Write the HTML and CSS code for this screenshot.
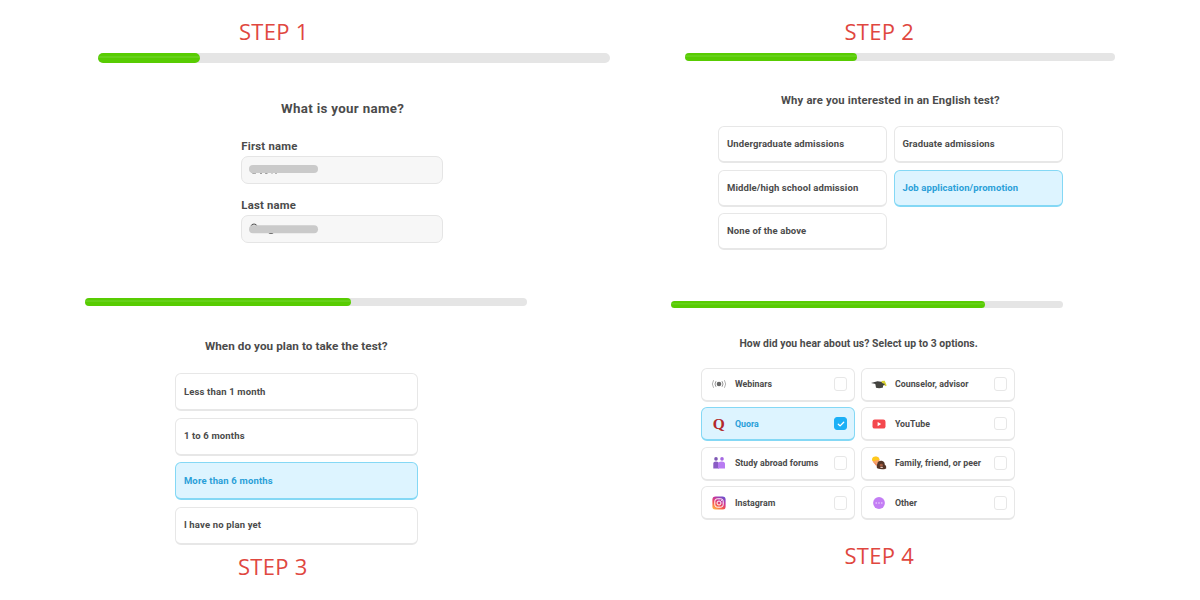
FILE: index.html
```
<!DOCTYPE html>
<html lang="en">
<head>
<meta charset="utf-8">
<title>Sign-up steps</title>
<link rel="stylesheet" href="styles.css">
</head>
<body>
<main class="board">
  <section class="panel panel-name">
    <h2 class="step">STEP 1</h2>
    <div class="track"><div class="fill"></div></div>
    <h3 class="question"><span>What is your name?</span></h3>
    <div class="form">
      <div class="label"><span>First name</span></div>
      <div class="field">
        <svg width="70" height="14" viewBox="0 0 70 14"><path d="M2 9.500q1 2.500 5 1.500M11 11.200h2M16 11q2 1 3-.5M22 10.800h2M26 11h2" fill="none" stroke="#777" stroke-width="1"/><rect x="0" y="3" width="69" height="8" rx="4" fill="#cacaca"/></svg>
      </div>
      <div class="label"><span>Last name</span></div>
      <div class="field">
        <svg width="70" height="14" viewBox="0 0 70 14"><path d="M2 5q3-4 6 0M20 11.700q2 1.500 4 0" fill="none" stroke="#555" stroke-width="1.200"/><rect x="0" y="4.300" width="69" height="8" rx="4" fill="#cacaca"/></svg>
      </div>
    </div>
  </section>

  <section class="panel panel-why">
    <h2 class="step">STEP 2</h2>
    <div class="track"><div class="fill"></div></div>
    <h3 class="question"><span>Why are you interested in an English test?</span></h3>
    <div class="options">
      <div class="option"><span>Undergraduate admissions</span></div>
      <div class="option"><span>Graduate admissions</span></div>
      <div class="option"><span>Middle/high school admission</span></div>
      <div class="option selected"><span>Job application/promotion</span></div>
      <div class="option"><span>None of the above</span></div>
    </div>
  </section>

  <section class="panel panel-when">
    <div class="track"><div class="fill"></div></div>
    <h3 class="question"><span>When do you plan to take the test?</span></h3>
    <div class="options">
      <div class="option"><span>Less than 1 month</span></div>
      <div class="option"><span>1 to 6 months</span></div>
      <div class="option selected"><span>More than 6 months</span></div>
      <div class="option"><span>I have no plan yet</span></div>
    </div>
    <h2 class="step">STEP 3</h2>
  </section>

  <section class="panel panel-hear">
    <div class="track"><div class="fill"></div></div>
    <h3 class="question"><span>How did you hear about us? Select up to 3 options.</span></h3>
    <div class="options">
      <div class="option">
        <svg class="icon" viewBox="0 0 16 16"><circle cx="8" cy="8" r="2.300" fill="#666"/><path d="M5 5.200q-2 2.800 0 5.600M11 5.200q2 2.800 0 5.600" fill="none" stroke="#888" stroke-width=".9"/><path d="M2.600 4.200q-2.600 3.800 0 7.600M13.400 4.200q2.600 3.800 0 7.600" fill="none" stroke="#aaa" stroke-width=".9"/></svg>
        <span>Webinars</span><i class="check"></i>
      </div>
      <div class="option">
        <svg class="icon" viewBox="0 0 16 16"><path d="M0 7 6.500 5.200l7 1-3 3z" fill="#3c3c3c"/><path d="M4 6.500h8v5q-3.500 1.300-7 .3z" fill="#454540"/><path d="M10.500 5l3.200-.2 2 4.700-1.300.8-1.800-2.800-1.700-.4z" fill="#d9d22f"/><circle cx="12.600" cy="8.500" r="1.100" fill="#45452f"/></svg>
        <span>Counselor, advisor</span><i class="check"></i>
      </div>
      <div class="option selected">
        <b class="icon quora">Q</b>
        <span>Quora</span><i class="check checked"><svg width="8" height="8" viewBox="0 0 8 8"><path d="M1.300 4.200 3.100 5.900 6.700 2.300" fill="none" stroke="#fff" stroke-width="1.300" stroke-linecap="round" stroke-linejoin="round"/></svg></i>
      </div>
      <div class="option">
        <svg class="icon" viewBox="0 0 16 16"><rect x="1.500" y="3.600" width="13" height="9" rx="2.200" fill="#f4484e"/><path d="M6.600 6v4.200l3.600-2.100z" fill="#fff"/></svg>
        <span>YouTube</span><i class="check"></i>
      </div>
      <div class="option">
        <svg class="icon" viewBox="0 0 16 16"><circle cx="5" cy="3.900" r="1.800" fill="#7f58b5"/><circle cx="11" cy="3.900" r="1.800" fill="#a568e2"/><path d="M2.300 13.600V8.600q0-2.200 2.700-2.200t3 2.200v5z" fill="#8a5cc4"/><path d="M7 13.600V9q0-2.600 3.600-2.600T14 9v4.600z" fill="#b87bf2"/></svg>
        <span>Study abroad forums</span><i class="check"></i>
      </div>
      <div class="option">
        <svg class="icon" viewBox="0 0 16 16"><circle cx="5" cy="5.200" r="3.400" fill="#f9a56c"/><path d="M1 5.500q-.3-3.800 3.600-4Q8 1.300 8.500 5L5 5.200l-1.600 1z" fill="#ffc91c"/><path d="M2.800 7.500l3.200 1 .5 2.400-2-.6z" fill="#f28b5b"/><path d="M6.200 9Q6.800 5.600 10.600 5.800q3.200.4 3.100 3.800 2 1 1.500 3.800-3.500 1.600-8.500.2-1.700-1-.5-4.600z" fill="#553526"/><path d="M8.800 9.200q1.700-1.200 3 .2v1.600q-1.500 1.200-3 0z" fill="#a05c42"/><path d="M9.400 12.400h2.400" stroke="#f3d9cf" stroke-width="1"/></svg>
        <span>Family, friend, or peer</span><i class="check"></i>
      </div>
      <div class="option">
        <svg class="icon" viewBox="0 0 16 16"><defs><linearGradient id="insta" x1=".2" y1="1" x2=".8" y2="0"><stop offset="0" stop-color="#ffb545"/><stop offset=".35" stop-color="#f5524e"/><stop offset=".65" stop-color="#c9359b"/><stop offset="1" stop-color="#6650d0"/></linearGradient></defs><rect x="1.400" y="1.400" width="13.200" height="13.200" rx="3.200" fill="url(#insta)"/><rect x="3.800" y="3.800" width="8.400" height="8.400" rx="2.400" fill="none" stroke="#fff" stroke-width="1"/><circle cx="8" cy="8" r="2" fill="none" stroke="#fff" stroke-width="1"/><circle cx="10.500" cy="5.500" r=".5" fill="#fff"/></svg>
        <span>Instagram</span><i class="check"></i>
      </div>
      <div class="option">
        <svg class="icon" viewBox="0 0 16 16"><circle cx="8" cy="8" r="5.900" fill="#c37df4"/><g fill="#f1dcff"><circle cx="5.200" cy="8" r=".75"/><circle cx="8" cy="8" r=".75"/><circle cx="10.800" cy="8" r=".75"/></g></svg>
        <span>Other</span><i class="check"></i>
      </div>
    </div>
    <h2 class="step">STEP 4</h2>
  </section>
</main>
</body>
</html>
```
FILE: styles.css
```
* { box-sizing: border-box; }
body {
  margin: 0;
  background: #fff;
  color: #4b4b4b;
  font-family: Roboto, "Liberation Sans", sans-serif;
  font-weight: 700;
}
.board {
  display: grid;
  grid-template-columns: 640px 560px;
  grid-template-rows: 285px 315px;
  width: 1200px;
  height: 600px;
  overflow: hidden;
}
.panel { display: flex; flex-direction: column; align-items: flex-start; }
.step, .question { margin: 0; white-space: nowrap; }
.step {
  font: 400 22px/24px "Open Sans", "Noto Sans", sans-serif;
  letter-spacing: .3px;
  color: #e0473f;
}
.question { line-height: 20px; }
.track { background: #e5e5e5; border-radius: 5px; }
.fill {
  height: 100%;
  border-radius: 5px;
  background: linear-gradient(#58cc02 25%, #66d11a 32%, #66d11a 46%, #58cc02 54%);
}
.options { display: grid; }
.option {
  display: flex;
  align-items: center;
  background: #fff;
  border: 1px solid #e7e7e7;
  border-bottom-width: 2px;
  border-radius: 6px;
  white-space: nowrap;
  font-size: 9.500px;
  letter-spacing: .1px;
}
.option.selected { background: #ddf4ff; border-color: #84d8f5; color: #2a9fd8; }

.panel-name { padding: 19px 0 0 98px; }
.panel-name .step { margin-left: 141px; }
.panel-name .track { width: 512px; height: 9.500px; margin-top: 10px; }
.panel-name .fill { width: 102px; }
.panel-name .question { margin: 36.500px 0 0 183px; font-size: 13.300px; letter-spacing: .33px; }
.form { width: 202px; margin: 18px 0 0 143.300px; }
.label { height: 19px; line-height: 20px; font-size: 11.300px; letter-spacing: .22px; }
.field {
  height: 28px;
  margin-bottom: 12px;
  padding: 5px 7px;
  background: #f7f7f7;
  border: 1px solid #e5e5e5;
  border-radius: 7px;
}
.field svg { display: block; }

.panel-why { padding: 19px 0 0 45px; }
.panel-why .step { margin-left: 159.500px; }
.panel-why .track { width: 430px; height: 8px; margin-top: 10px; }
.panel-why .fill { width: 172px; }
.panel-why .question { margin: 29.500px 0 0 96px; font-size: 11.300px; letter-spacing: .17px; }
.panel-why .options { grid-template-columns: 169px 169px; gap: 6.500px; margin: 15.500px 0 0 33px; }
.panel-why .option { height: 37px; padding: 0 0 1px 8px; }

.panel-when { padding: 13px 0 0 85.400px; }
.panel-when .track { width: 442px; height: 8px; }
.panel-when .fill { width: 265.500px; }
.panel-when .question { margin: 30px 0 0 119.500px; font-size: 11.700px; letter-spacing: .07px; }
.panel-when .options { width: 243px; gap: 6.600px; margin: 17px 0 0 89.500px; }
.panel-when .option { height: 38px; padding: 0 0 1px 8px; letter-spacing: .16px; }
.panel-when .step { margin: 9px 0 0 152.600px; }

.panel-hear { padding: 16px 0 0 31.400px; }
.panel-hear .track { width: 392px; height: 7px; }
.panel-hear .fill { width: 313.500px; }
.panel-hear .question { margin: 25.500px 0 0 68px; font-size: 10.400px; letter-spacing: .05px; }
.panel-hear .options { grid-template-columns: 154px 154px; gap: 5.600px 6px; margin: 14px 0 0 30px; }
.panel-hear .option { height: 34px; padding: 0 7px 0 8.500px; font-size: 8.800px; letter-spacing: .03px; }
.icon { flex: none; width: 16px; height: 16px; margin-right: 8px; }
.panel-hear .quora { font: 700 15.500px/16px "Liberation Serif", serif; color: #b3292b; text-align: center; }
.check {
  display: grid;
  place-items: center;
  width: 13.500px;
  height: 13.500px;
  margin-left: auto;
  background: #fff;
  border: 1px solid #e7e7e7;
  border-radius: 3px;
}
.checked { background: #1cb0f6; border-color: #1cb0f6; }
.panel-hear .step { margin: 22.500px 0 0 173px; }
```
